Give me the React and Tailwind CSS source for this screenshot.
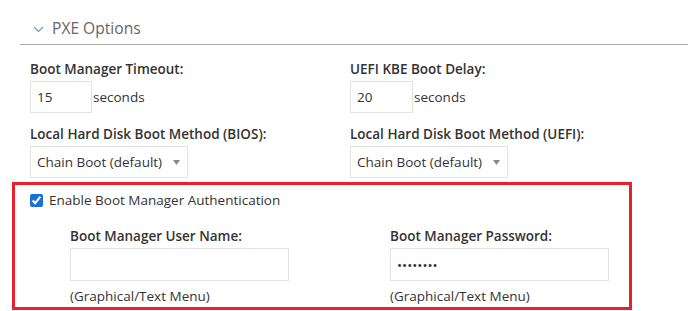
import { useState } from 'react';

const TextBox = ({ value, className = '', type = 'text' }) => (
  <input
    type={type}
    readOnly
    value={value}
    className={`h-[32px] border border-[#e2e2e2] bg-white px-[6px] text-[13.5px] text-[#333] outline-none ${className}`}
  />
);

const SelectBox = ({ label }) => (
  <div className="flex h-[32px] w-[158px] items-center justify-between border border-[#e2e2e2] bg-white pl-[6px] pr-[7px]">
    <span className="text-[13.5px] text-[#333]">{label}</span>
    <svg width="7" height="5" viewBox="0 0 7 5" className="mt-[1px]">
      <path d="M0 0h7L3.5 5z" fill="#8a8a8a" />
    </svg>
  </div>
);

export default function App() {
  const [enabled, setEnabled] = useState(true);

  return (
    <div className="h-[311px] w-[688px] overflow-hidden bg-white font-['Open_Sans','Liberation_Sans',sans-serif] text-[13.5px] text-[#333]">
      {/* Section header */}
      <div className="pl-5 pt-[16px]">
        <div className="flex h-[29px] items-center gap-[8px] border-b border-[#a9a9a9] pl-[13px] pb-[2px]">
          <svg width="11" height="7" viewBox="0 0 11 7">
            <path d="M1 1l4.5 4.5L10 1" fill="none" stroke="#5aa3b8" strokeWidth="1.2" />
          </svg>
          <span className="text-[15.6px] leading-none text-[#666]">PXE Options</span>
        </div>
      </div>

      {/* Timeouts and boot methods */}
      <div className="grid grid-cols-[320px_320px] pl-[30px] pt-[14px]">
        <div>
          <div className="h-[22px] font-semibold leading-[20px]">Boot Manager Timeout:</div>
          <div className="flex">
            <TextBox value="15" className="w-[62px]" />
            <span className="ml-[1px] mt-[6px]">seconds</span>
          </div>
        </div>
        <div>
          <div className="h-[22px] font-semibold leading-[20px]">UEFI KBE Boot Delay:</div>
          <div className="flex">
            <TextBox value="20" className="w-[63px]" />
            <span className="ml-[1px] mt-[6px]">seconds</span>
          </div>
        </div>

        <div className="pt-[11px]">
          <div className="h-[22px] font-semibold leading-[20px]">Local Hard Disk Boot Method (BIOS):</div>
          <SelectBox label="Chain Boot (default)" />
        </div>
        <div className="pt-[11px]">
          <div className="h-[22px] font-semibold leading-[20px]">Local Hard Disk Boot Method (UEFI):</div>
          <SelectBox label="Chain Boot (default)" />
        </div>
      </div>

      {/* Authentication block */}
      <div className="ml-[12px] mt-[4px] h-[128px] w-[620px] border-[3px] border-[#e8212b] pl-[15px] pt-[5px]">
        <label className="flex items-center gap-[6px]">
          <input
            type="checkbox"
            checked={enabled}
            onChange={(e) => setEnabled(e.target.checked)}
            className="m-0 h-[13px] w-[13px] accent-[#1a6fdc]"
          />
          <span>Enable Boot Manager Authentication</span>
        </label>

        <div className="grid grid-cols-[320px_320px] pl-[40px] pt-[16px]">
          <div>
            <div className="h-[22px] font-semibold leading-[20px]">Boot Manager User Name:</div>
            <TextBox value="" className="h-[33px] w-[219px]" />
            <div className="pt-[5px] leading-[20px]">(Graphical/Text Menu)</div>
          </div>
          <div>
            <div className="h-[22px] font-semibold leading-[20px]">Boot Manager Password:</div>
            <TextBox type="password" value="password" className="h-[33px] w-[219px]" />
            <div className="pt-[5px] leading-[20px]">(Graphical/Text Menu)</div>
          </div>
        </div>
      </div>
    </div>
  );
}
